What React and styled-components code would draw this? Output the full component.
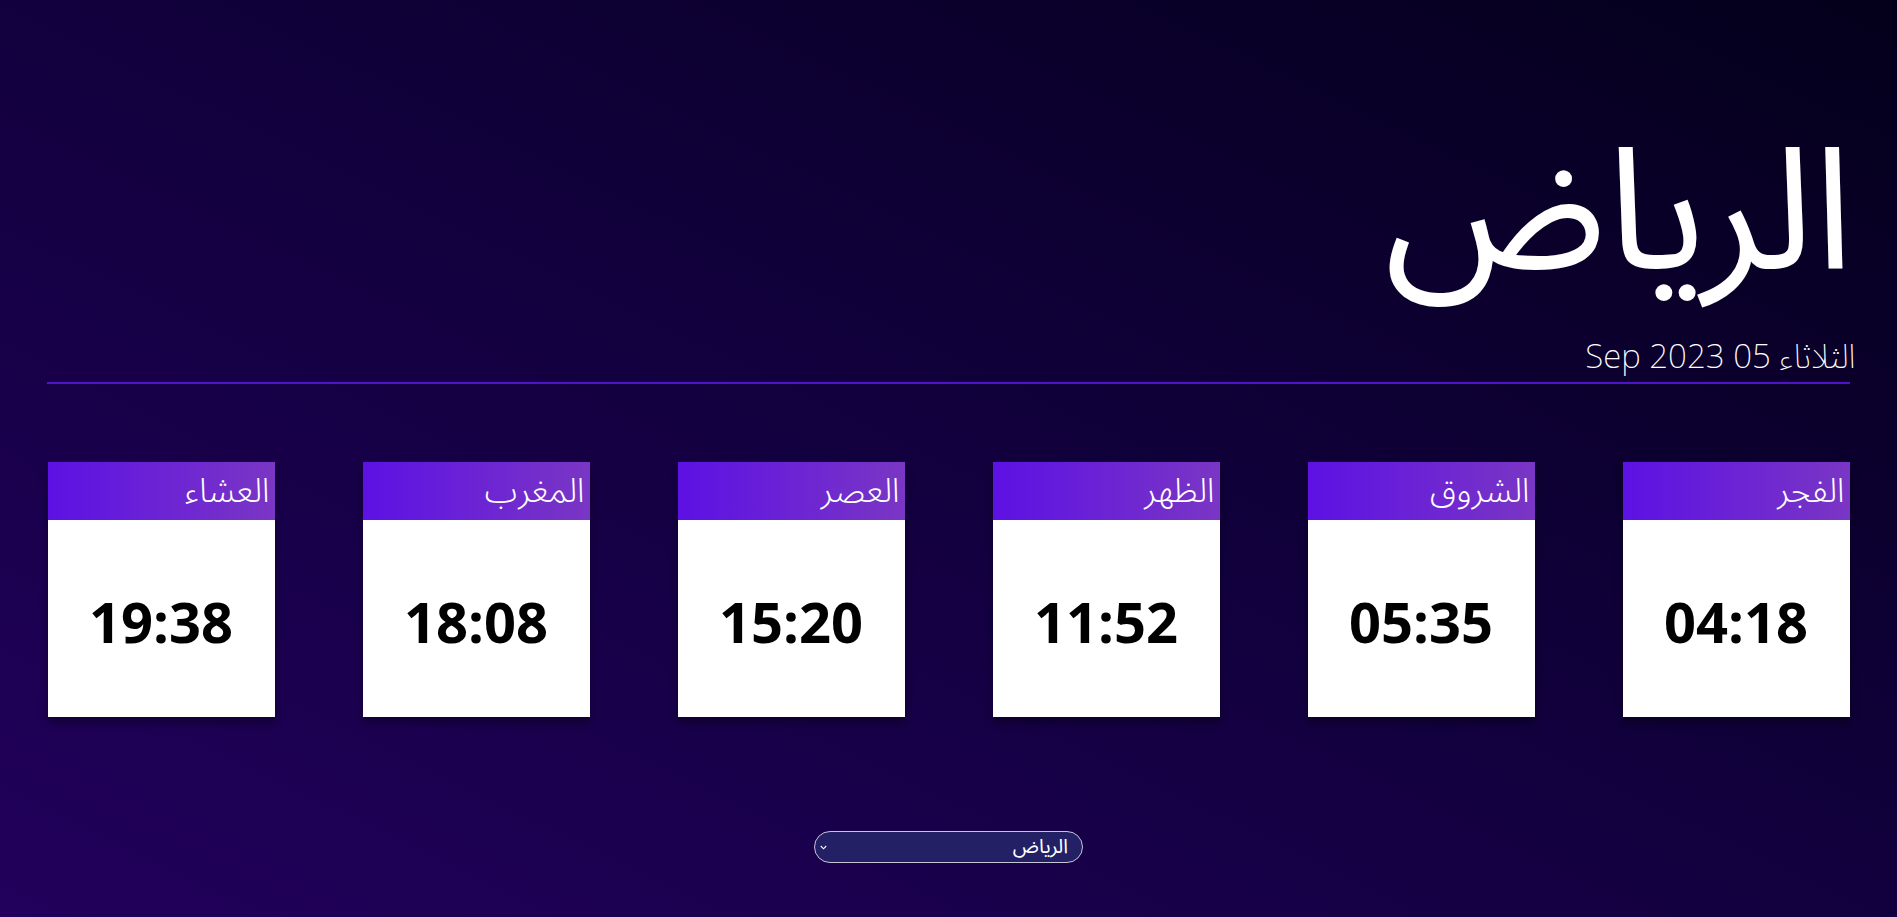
import React from "react";
import styled, { createGlobalStyle } from "styled-components";

const Global = createGlobalStyle`
  html, body { margin: 0; padding: 0; }
  body { font-family: "Noto Sans Arabic", "Noto Sans", sans-serif; }
  * { box-sizing: border-box; }
`;

const Page = styled.div`
  direction: rtl;
  min-height: 100vh;
  background: linear-gradient(to top right, #22005c 0%, #12003e 50%, #04001b 100%);
  color: #fff;
  padding-top: 112px;
`;

const Container = styled.div`
  width: 95%;
  margin: 0 auto;
`;

const Title = styled.h1`
  margin: 0 -4px 0 0;
  font-weight: 400;
  font-size: 170px;
  line-height: 1.2;
`;

const DateLine = styled.p`
  margin: 21px 0 0;
  font-weight: 250;
  font-size: 33px;
  line-height: 1.3;
  padding-bottom: 2px;
  border-bottom: 2px solid #4f13c9;
`;

const DateText = styled.span`
  margin-right: -6px;
`;

const Cards = styled.div`
  display: flex;
  justify-content: space-between;
  margin-top: 78px;
`;

const Card = styled.div`
  width: 227px;
  height: 255px;
  display: flex;
  flex-direction: column;
  background: #fff;
  box-shadow: 0 6px 8px rgba(0, 0, 0, 0.35);
`;

const CardHead = styled.div`
  height: 58px;
  background: linear-gradient(to left, #7a36c4 0%, #5d11e4 100%);
  color: #fff;
  font-weight: 300;
  font-size: 34px;
  line-height: 1;
  padding-right: 5px;
  display: flex;
  align-items: center;
`;

const CardTime = styled.div`
  flex: 1;
  display: flex;
  align-items: center;
  justify-content: center;
  color: #000;
  font-weight: 700;
  font-size: 56px;
  padding-top: 13px;
`;

const SelectRow = styled.div`
  display: flex;
  justify-content: center;
  margin-top: 114px;
`;

const SelectBox = styled.div`
  position: relative;
  width: 269px;
  height: 32px;
`;

const Select = styled.select`
  appearance: none;
  width: 100%;
  height: 100%;
  border-radius: 16px;
  border: 1px solid #c8c4d6;
  background: #232066;
  color: #fff;
  font-family: "Noto Sans Arabic", "Noto Sans", sans-serif;
  font-size: 20px;
  line-height: 30px;
  padding: 0 14px 0 24px;
  direction: rtl;
  outline: none;
`;

const Chevron = styled.svg`
  position: absolute;
  left: 6px;
  top: 14px;
  width: 7px;
  height: 5px;
  pointer-events: none;
`;

const prayers = [
  ["الفجر", "04:18"],
  ["الشروق", "05:35"],
  ["الظهر", "11:52"],
  ["العصر", "15:20"],
  ["المغرب", "18:08"],
  ["العشاء", "19:38"],
];

export default function App() {
  return (
    <>
      <Global />
      <Page>
        <Container>
          <Title>الرياض</Title>
          <DateLine>
            <DateText>الثلاثاء 05 Sep 2023</DateText>
          </DateLine>
          <Cards>
            {prayers.map(([name, time]) => (
              <Card key={name}>
                <CardHead>{name}</CardHead>
                <CardTime>{time}</CardTime>
              </Card>
            ))}
          </Cards>
          <SelectRow>
            <SelectBox>
              <Select defaultValue="riyadh">
                <option value="riyadh">الرياض</option>
                <option value="jeddah">جدة</option>
                <option value="makkah">مكة</option>
              </Select>
              <Chevron viewBox="0 0 7 5">
                <path d="M0.8 1 L3.5 3.8 L6.2 1" fill="none" stroke="#fff" strokeWidth="1.1" />
              </Chevron>
            </SelectBox>
          </SelectRow>
        </Container>
      </Page>
    </>
  );
}
